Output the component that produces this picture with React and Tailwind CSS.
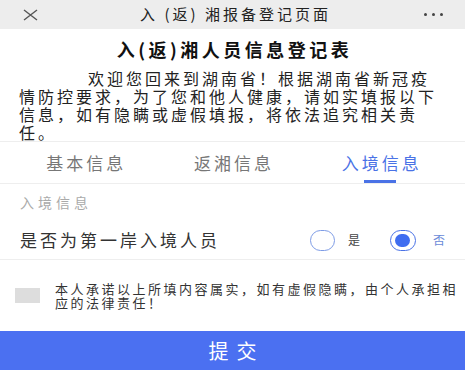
import React from 'react';

const font = "font-['Noto_Sans_CJK_SC','Noto_Sans',sans-serif]";

export default function App() {
  return (
    <div className={`w-[474px] h-[387px] bg-white overflow-hidden ${font}`}>
      <div className="w-[465px]">
        {/* header */}
        <div className="h-[29px] bg-[#ededed] flex items-center justify-between pl-[22px] pr-[22px]">
          <svg width="17" height="12" viewBox="0 0 17 12">
            <path d="M2 1 L15 11 M15 1 L2 11" stroke="#555" strokeWidth="1.4" fill="none" />
          </svg>
          <span className="text-[15px] tracking-[3px] text-[#222] ml-[8px]">入 (返) 湘报备登记页面</span>
          <div className="flex gap-[5px]">
            <span className="w-[3px] h-[3px] rounded-full bg-[#444]" />
            <span className="w-[3px] h-[3px] rounded-full bg-[#444]" />
            <span className="w-[3px] h-[3px] rounded-full bg-[#444]" />
          </div>
        </div>

        {/* title */}
        <div className="h-[40px] flex items-center justify-center">
          <h1 className="text-[18px] font-bold tracking-[3.5px] text-[#111] pl-[4px]">入(返)湘人员信息登记表</h1>
        </div>

        {/* intro */}
        <p className="pl-[19px] w-[444px] text-[16px] leading-[18px] tracking-[3px] text-[#222] indent-[69px]">
          欢迎您回来到湖南省！根据湖南省新冠疫情防控要求，为了您和他人健康，请如实填报以下信息，如有隐瞒或虚假填报，将依法追究相关责任。
        </p>

        {/* tabs */}
        <div className="h-[43px] border-t border-b border-[#eeeeee] grid grid-cols-3 px-[11px]">
          <div className="flex items-center justify-center text-[17px] tracking-[3px] text-[#777] pl-[3px]">基本信息</div>
          <div className="flex items-center justify-center text-[17px] tracking-[3px] text-[#777] pl-[3px]">返湘信息</div>
          <div className="relative flex items-center justify-center text-[17px] tracking-[3px] text-[#4a72e6] pl-[3px]">
            入境信息
            <span className="absolute bottom-0 left-1/2 -translate-x-1/2 w-[32px] h-[3px] bg-[#4a72e6]" />
          </div>
        </div>

        {/* section label */}
        <div className="h-[37px] flex items-center pl-[20px] text-[14px] tracking-[4px] text-[#aaaaaa]">入境信息</div>

        {/* question row */}
        <div className="h-[39px] border-b border-[#eeeeee] flex items-center justify-between pl-[20px] pr-[20px]">
          <span className="text-[17px] tracking-[3px] text-[#333]">是否为第一岸入境人员</span>
          <div className="flex items-center">
            <span className="w-[25px] h-[21px] rounded-full border border-[#7e9ce6] bg-white" />
            <span className="ml-[13px] text-[12px] text-[#444]">是</span>
            <span className="ml-[30px] w-[26px] h-[21px] rounded-full border-[1.5px] border-[#4a72e6] flex items-center justify-center">
              <span className="w-[15px] h-[13px] rounded-full bg-[#3f6df0]" />
            </span>
            <span className="ml-[17px] text-[12px] text-[#6b8ad8]">否</span>
          </div>
        </div>

        {/* promise */}
        <div className="flex items-start pl-[15px] pt-[22px] pb-[21px]">
          <span className="mt-[6px] w-[25px] h-[15px] bg-[#dddddd] shrink-0" />
          <p className="ml-[15px] text-[13px] leading-[14px] tracking-[2.5px] text-[#333]">
            本人承诺以上所填内容属实，如有虚假隐瞒，由个人承担相应的法律责任！
          </p>
        </div>

        {/* submit */}
        <button className="w-full h-[39px] bg-[#4b70f1] text-white text-[20px] tracking-[8px] pl-[8px] flex items-center justify-center">
          提交
        </button>
      </div>
    </div>
  );
}
